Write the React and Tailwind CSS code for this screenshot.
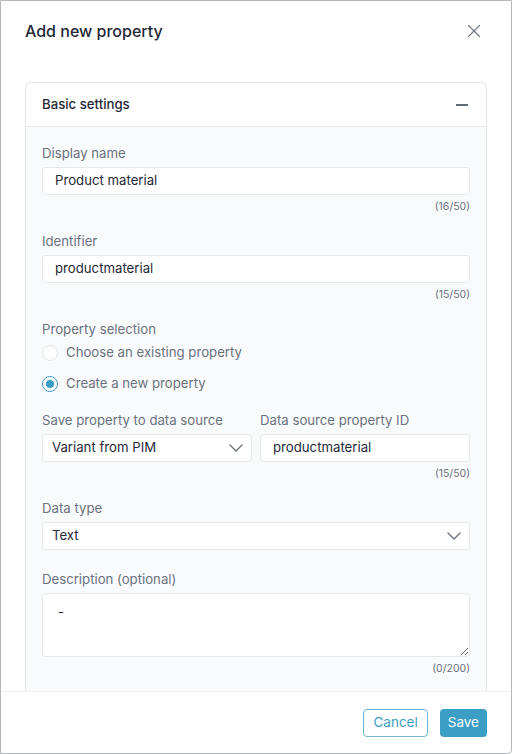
import { X, ChevronDown } from 'lucide-react'

const FONT = { fontFamily: 'Inter, "Noto Sans", sans-serif' }

function Counter({ children }) {
  return <div className="mt-[5px] text-right text-[10.5px] leading-[14px] text-[#6b7280]">{children}</div>
}

function Label({ children }) {
  return <div className="mb-1 h-5 text-[13.2px] leading-5 text-[#6b7280]">{children}</div>
}

function TextInput({ value }) {
  return (
    <div className="flex h-7 items-center rounded border border-[#e5e7eb] bg-white px-3 text-[13.2px] text-[#1f2937]">
      {value}
    </div>
  )
}

function Select({ value }) {
  return (
    <div className="flex h-7 items-center justify-between rounded border border-[#e5e7eb] bg-white pl-[9px] pr-[3px] text-[13.2px] text-[#1f2937]">
      <span>{value}</span>
      <ChevronDown size={24} strokeWidth={1.4} className="text-[#6b7280]" />
    </div>
  )
}

function Radio({ checked, label }) {
  return (
    <div className="flex h-6 items-center gap-2">
      {checked ? (
        <span className="flex h-4 w-4 items-center justify-center rounded-full border border-[#3b9ec4] bg-white">
          <span className="h-2 w-2 rounded-full bg-[#3b9ec4]" />
        </span>
      ) : (
        <span className="h-4 w-4 rounded-full border border-[#e1e4e8] bg-white" />
      )}
      <span className="text-[13.2px] text-[#6b7280]">{label}</span>
    </div>
  )
}

export default function App() {
  return (
    <div style={FONT} className="flex h-[754px] w-[512px] flex-col overflow-hidden rounded-br border border-[#b4b8bc] bg-white">
      {/* Header */}
      <div className="flex items-center justify-between pl-6 pr-[26px] pt-[18px]">
        <h1 className="text-[16px] font-medium leading-6 text-[#1f2937]">Add new property</h1>
        <X size={22} strokeWidth={1.2} className="text-[#6b7280]" />
      </div>

      {/* Body */}
      <div className="flex-1 overflow-hidden px-6 pt-[39px]">
        <div className="rounded-md border border-[#e5e7eb]">
          <div className="flex h-[44px] items-center justify-between border-b border-[#e5e7eb] px-4">
            <span className="text-[13.2px] font-medium text-[#1f2937]">Basic settings</span>
            <span className="mr-[2px] h-[2px] w-3 bg-[#5f6b73]" />
          </div>

          <div className="bg-[#f9fafb] px-4 pb-6 pt-4">
            <Label>Display name</Label>
            <TextInput value="Product material" />
            <Counter>(16/50)</Counter>

            <div className="mt-[17px]">
              <Label>Identifier</Label>
              <TextInput value="productmaterial" />
              <Counter>(15/50)</Counter>
            </div>

            <div className="mt-[17px]">
              <div className="h-5 text-[13.2px] leading-5 text-[#6b7280]">Property selection</div>
              <div className="mt-[2px] flex flex-col gap-[7px]">
                <Radio label="Choose an existing property" />
                <Radio checked label="Create a new property" />
              </div>
            </div>

            <div className="mt-[14px] grid grid-cols-2 gap-2">
              <div>
                <Label>Save property to data source</Label>
                <Select value="Variant from PIM" />
              </div>
              <div>
                <Label>Data source property ID</Label>
                <TextInput value="productmaterial" />
                <Counter>(15/50)</Counter>
              </div>
            </div>

            <div className="mt-[17px]">
              <Label>Data type</Label>
              <Select value="Text" />
            </div>

            <div className="mt-[19px]">
              <Label>Description (optional)</Label>
              <textarea
                defaultValue="-"
                className="block h-16 w-full rounded border border-[#e5e7eb] bg-white px-[15px] py-2 text-[13.2px] leading-5 text-[#1f2937] outline-none"
              />
              <Counter>(0/200)</Counter>
            </div>
          </div>
        </div>
      </div>

      {/* Footer */}
      <div className="flex h-[62px] shrink-0 items-center justify-end gap-3 border-t border-[#eef0f2] px-6">
        <button className="h-7 rounded border border-[#6db6d4] bg-white px-[9px] text-[13.5px] text-[#3b9ec4]">Cancel</button>
        <button className="h-7 rounded bg-[#3b9ec4] px-2 text-[13.5px] text-white">Save</button>
      </div>
    </div>
  )
}
